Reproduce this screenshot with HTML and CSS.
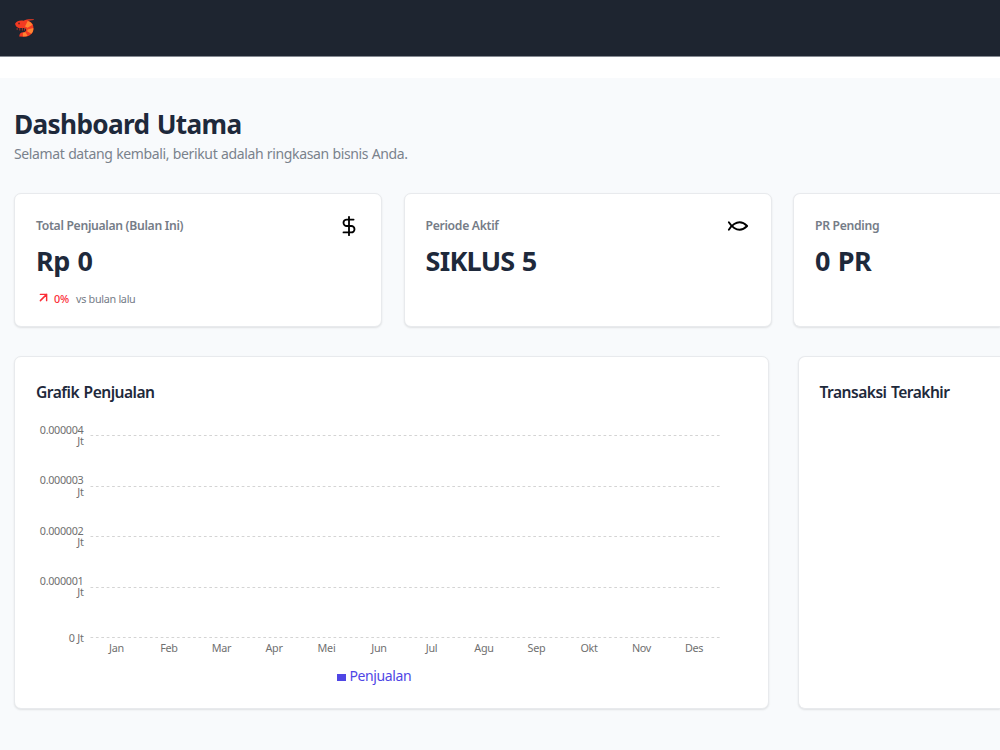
FILE: index.html
```html
<!DOCTYPE html>
<html lang="id">
<head>
<meta charset="utf-8">
<title>Dashboard Utama</title>
<link rel="stylesheet" href="styles.css">
</head>
<body>
<header class="topbar">
  <svg class="logo" viewBox="0 0 20 20" aria-label="Logo udang">
    <path d="M1 5.500C2.500 2.500 6 2 9 2.500C12 1 15 1 19 1.200L18.700 2L13 2.700C17 3.500 19 7 18.500 11C18 15.500 14 18 9.500 17.900L5 17.500C5 15 6.500 13.500 9 13.500C12 13 12.500 10.500 10 9.500L4.500 9.500C2.500 9 1.500 7.500 1 5.500Z" fill="#f33a22"/>
    <path d="M13 2.900L10.500 8L13 9.200L17.700 6.500C16.500 4.500 15 3.500 13 2.900ZM18.400 9.500L13 11L12.500 12.500L16.500 15C18 13.500 18.500 12 18.400 9.500ZM11 13.500L8.500 14L8.500 17.700L13 17.200Z" fill="#ff8430"/>
    <path d="M3 9.500v2M5.500 9.500v2.500M8 9.500v2.500M10 9.500v2.500" stroke="#a83228" stroke-width=".9"/>
    <circle cx="4.800" cy="5.200" r=".8" fill="#5d2026"/>
  </svg>
</header>
<main class="page">
  <h1 class="title">Dashboard Utama</h1>
  <p class="subtitle">Selamat datang kembali, berikut adalah ringkasan bisnis Anda.</p>
  <section class="stats">
    <article class="card stat">
      <div class="stat-head"><span class="label">Total Penjualan (Bulan Ini)</span>
        <svg class="icon" viewBox="0 0 24 24"><path d="M12 2v20M17 5H9.500a3.500 3.500 0 0 0 0 7h5a3.500 3.500 0 0 1 0 7H6"/></svg>
      </div>
      <div class="value">Rp 0</div>
      <div class="trend"><svg class="arrow" viewBox="0 0 24 24"><path d="M7 7h10v10M7 17 17 7"/></svg><span class="percent">0%</span><span class="versus">vs bulan lalu</span></div>
    </article>
    <article class="card stat">
      <div class="stat-head"><span class="label">Periode Aktif</span>
        <svg class="icon" viewBox="0 0 24 24"><path d="M2 16s9-15 20-4C11 23 2 8 2 8"/></svg>
      </div>
      <div class="value value-cycle">SIKLUS 5</div>
    </article>
    <article class="card stat card-cut">
      <div class="stat-head"><span class="label">PR Pending</span></div>
      <div class="value">0 PR</div>
    </article>
  </section>
  <section class="panels">
    <article class="card panel">
      <h2 class="panel-title">Grafik Penjualan</h2>
      <svg class="chart" viewBox="0 0 712 275">
        <g class="grid">
          <path d="M54.500 21.500H685M54.500 72.500H685M54.500 122.500H685M54.500 173.500H685M54.500 223.500H685"/>
        </g>
        <g class="tick tick-y">
          <text x="47.500" y="20">0.000004</text><text x="47.500" y="30.500">Jt</text>
          <text x="47.500" y="70">0.000003</text><text x="47.500" y="81.500">Jt</text>
          <text x="47.500" y="121">0.000002</text><text x="47.500" y="131.500">Jt</text>
          <text x="47.500" y="171">0.000001</text><text x="47.500" y="182">Jt</text>
          <text x="47.500" y="228">0 Jt</text>
        </g>
        <g class="tick tick-x">
          <text x="80.500" y="238">Jan</text><text x="133" y="238">Feb</text><text x="185.500" y="238">Mar</text><text x="238" y="238">Apr</text><text x="290.500" y="238">Mei</text><text x="343" y="238">Jun</text><text x="395.500" y="238">Jul</text><text x="448" y="238">Agu</text><text x="500.500" y="238">Sep</text><text x="553" y="238">Okt</text><text x="605.500" y="238">Nov</text><text x="658" y="238">Des</text>
        </g>
        <rect class="legend-mark" x="301" y="260" width="9" height="7"/>
        <text class="legend" x="313.500" y="267">Penjualan</text>
      </svg>
    </article>
    <article class="card panel card-cut"><h2 class="panel-title">Transaksi Terakhir</h2></article>
  </section>
</main>
</body>
</html>
```
FILE: styles.css
```css
* { box-sizing: border-box; margin: 0; }
body { width: 1000px; height: 750px; overflow: hidden; background: #fff; color: #1e293b; font-family: "Noto Sans", "Open Sans", sans-serif; }
.topbar { height: 57px; padding: 18px 14px; background: #1e2530; border-bottom: 1px solid #858a92; }
.logo { display: block; width: 21px; height: 21px; }
.page { margin-top: 21px; height: 672px; padding: 29px 0 0 14px; background: #f8fafc; }
.title { font-size: 26.200px; line-height: 34px; font-weight: 700; letter-spacing: -.65px; word-spacing: 1px; }
.subtitle { margin-top: 2px; font-size: 14px; line-height: 22px; color: #7a828c; letter-spacing: -.37px; word-spacing: .4px; white-space: nowrap; }
.stats { display: grid; grid-template-columns: 368px 368px 1fr; column-gap: 21.500px; margin-top: 28px; }
.card { background: #fff; border: 1px solid #e8eaed; border-radius: 7px; box-shadow: 0 1px 2px #0000001a; }
.card-cut { border-right: 0; border-radius: 7px 0 0 7px; }
.stat { height: 134px; padding: 21px 22px 21px 21px; }
.stat-head { display: flex; justify-content: space-between; align-items: center; height: 22px; }
.label { margin-top: -2px; font-size: 12.200px; font-weight: 600; color: #757c87; letter-spacing: -.31px; }
.icon { margin: -1px -.5px 0 0; width: 22px; height: 22px; fill: none; stroke: #000; stroke-width: 2; stroke-linecap: round; stroke-linejoin: round; }
.value { margin-top: 7px; font-size: 27px; line-height: 34px; font-weight: 700; letter-spacing: -.4px; word-spacing: 1px; }
.value-cycle { letter-spacing: -.75px; }
.trend { display: flex; align-items: center; margin-top: 12px; height: 16px; font-size: 10.800px; }
.arrow { margin-top: -1px; width: 15px; height: 15px; fill: none; stroke: #fb2c36; stroke-width: 2.300; stroke-linecap: round; stroke-linejoin: round; }
.percent { margin-left: 3px; color: #fb2c36; font-weight: 500; letter-spacing: -.2px; }
.versus { margin-left: 7px; color: #757c87; letter-spacing: -.3px; }
.panels { display: grid; grid-template-columns: 755px 1fr; column-gap: 28.500px; margin-top: 29px; }
.panel { height: 353px; padding: 22px 21px 20px; }
.panel-title { font-size: 15.600px; line-height: 26px; font-weight: 600; letter-spacing: -.53px; word-spacing: 1px; }
.chart { display: block; margin-top: 9px; width: 712px; height: 275px; overflow: visible; }
.grid { fill: none; stroke: #d4d4d4; stroke-dasharray: 2.700; }
.tick { font-size: 10.800px; fill: #707070; letter-spacing: -.3px; }
.tick-y { text-anchor: end; }
.tick-x { text-anchor: middle; }
.legend-mark { fill: #4f46e5; }
.legend { fill: #4f46e5; font-size: 14px; letter-spacing: -.4px; }
```
